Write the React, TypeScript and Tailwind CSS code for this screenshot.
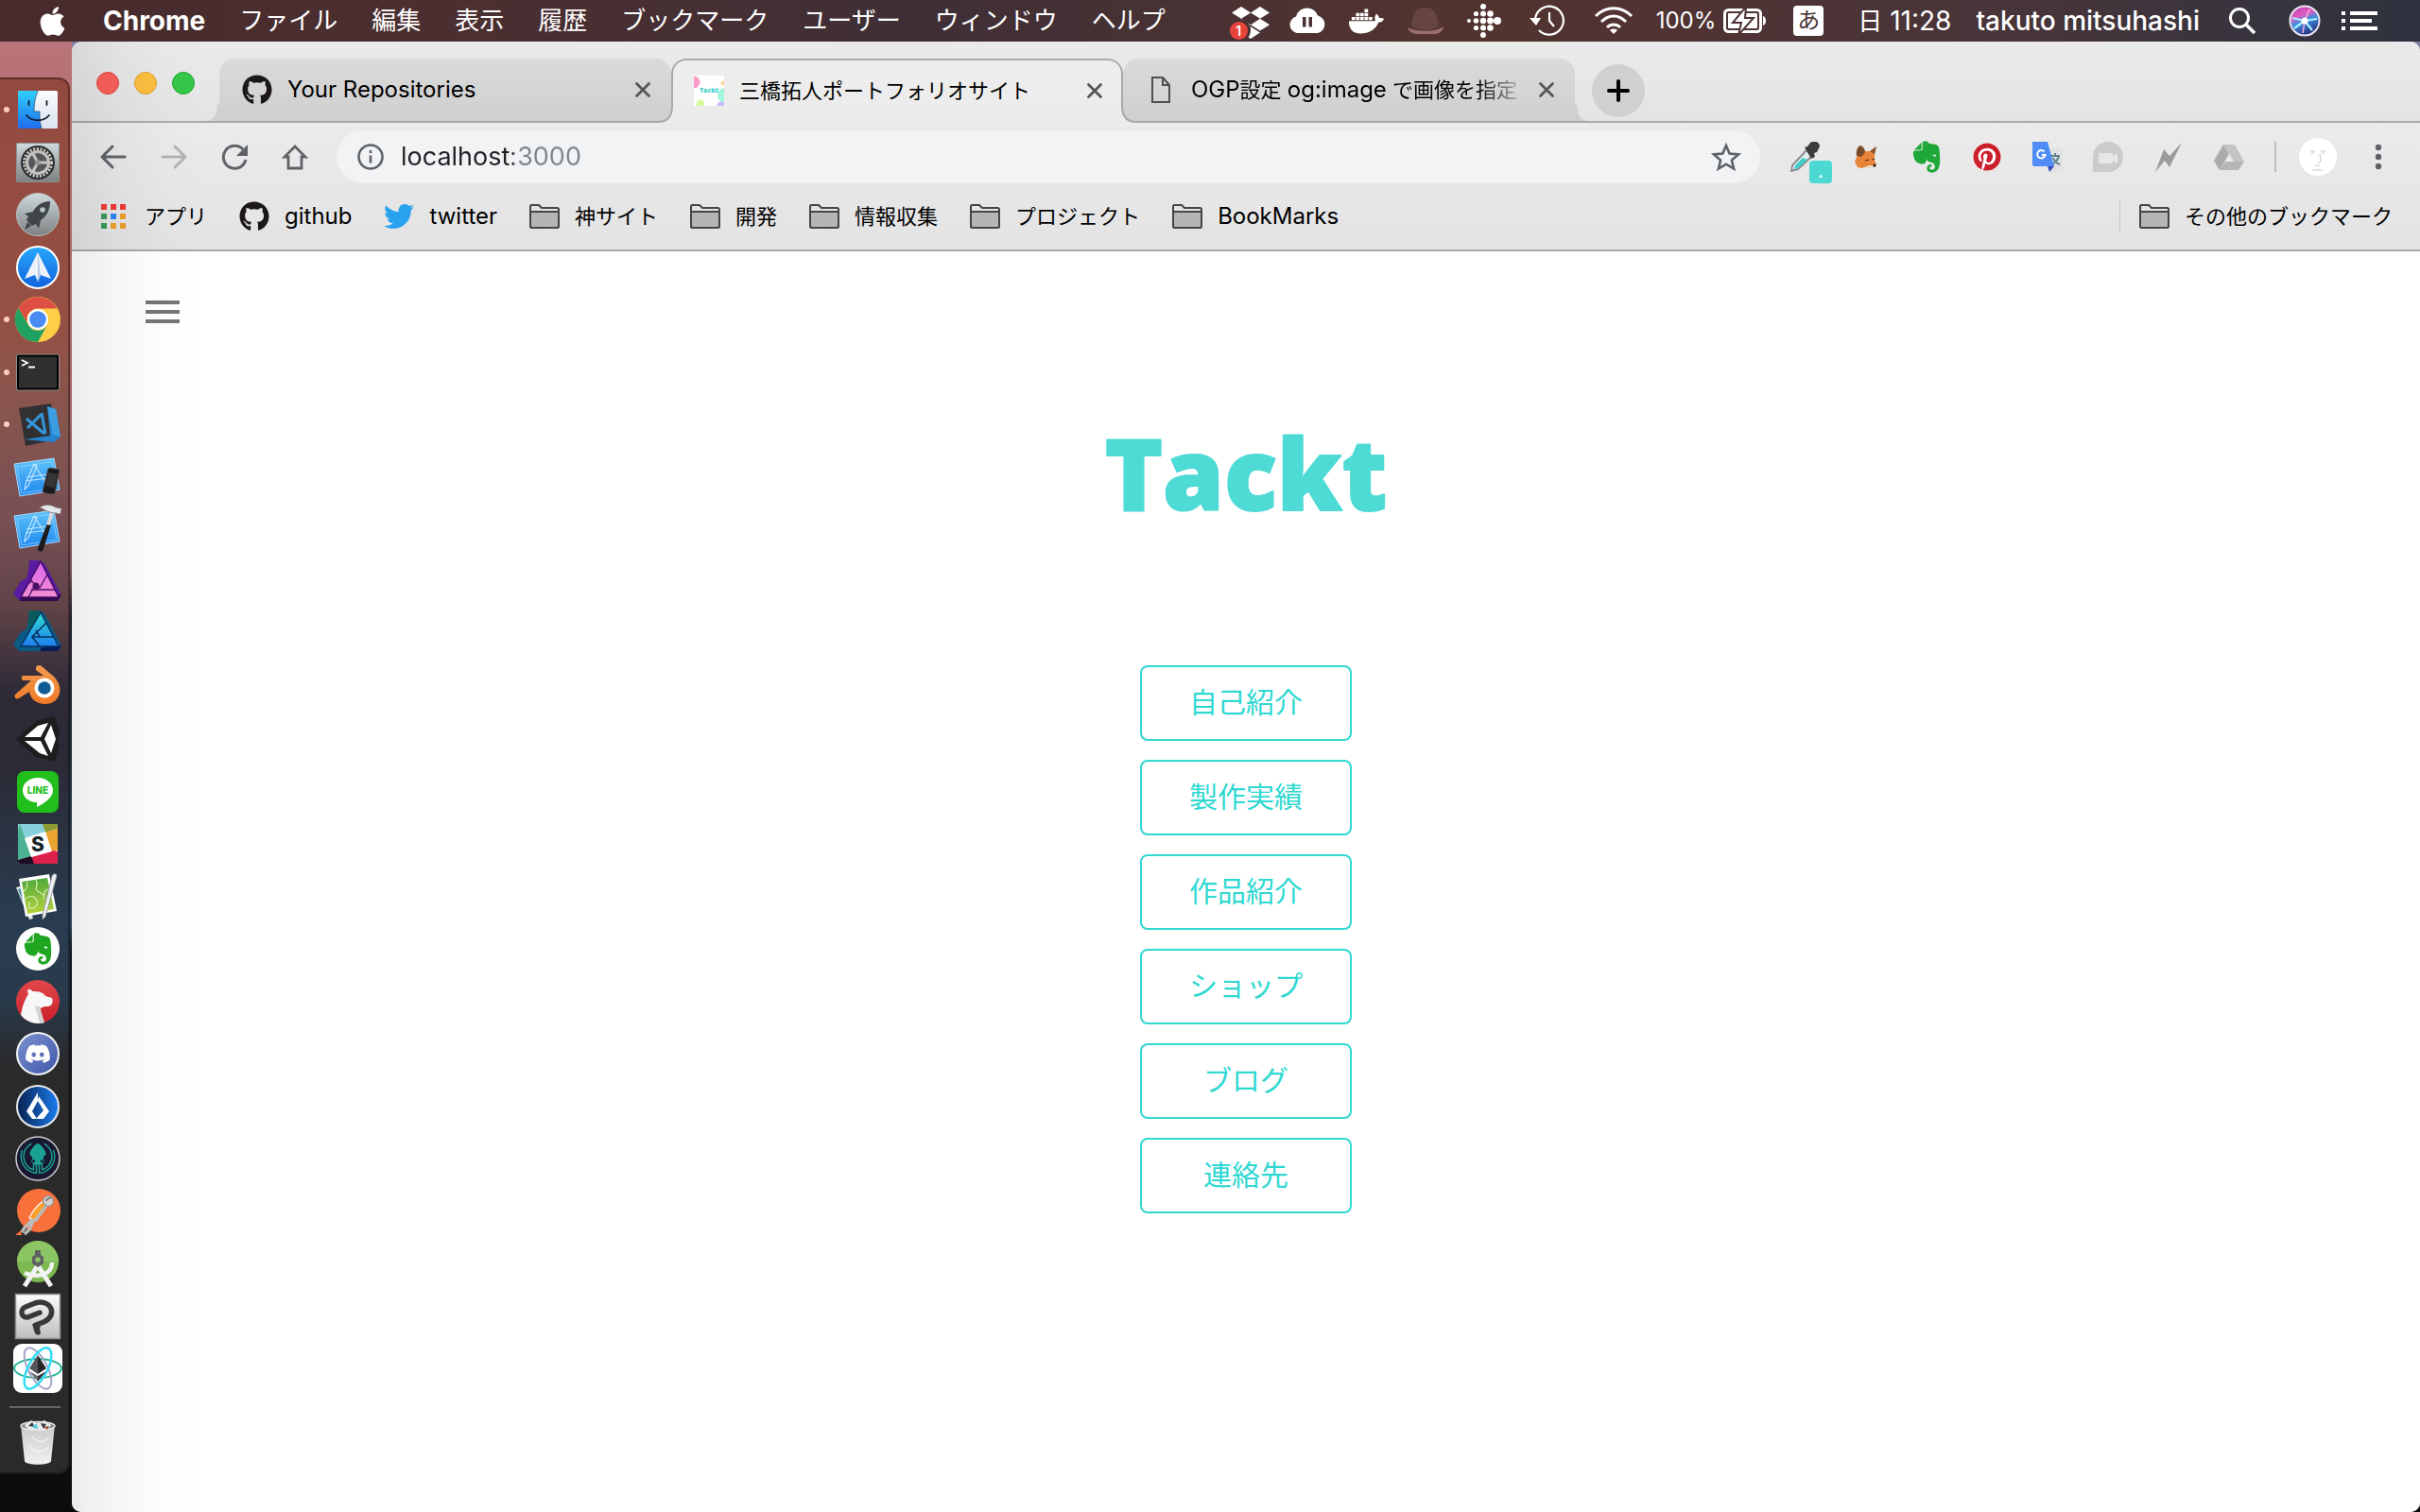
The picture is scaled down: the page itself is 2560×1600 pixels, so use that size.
import type { ReactNode } from "react";
import {
  FaApple,
  FaDiscord,
  FaDocker,
  FaDropbox,
  FaEvernote,
  FaGithub,
  FaGitkraken,
  FaPinterest,
  FaTwitter,
} from "react-icons/fa6";

/* ---------- menu bar ---------- */

const menus = ["ファイル", "編集", "表示", "履歴", "ブックマーク", "ユーザー", "ウィンドウ", "ヘルプ"];

function DropboxStatus() {
  return (
    <span className="relative -mr-1 block h-9 w-10">
      <FaDropbox className="absolute top-0 left-0 size-10" />
      <span className="absolute -bottom-1 -left-1 size-6 rounded-full bg-[#4a3132]" />
      <span className="absolute -bottom-[2px] -left-[2px] flex size-[19px] items-center justify-center rounded-full bg-[#e8443c] text-sm leading-none font-semibold">
        1
      </span>
    </span>
  );
}

function CloudPause() {
  return (
    <svg viewBox="0 0 40 28" className="h-7 w-10" fill="#fff">
      <path d="M9 27a9 9 0 0 1-1-17.500A12 12 0 0 1 31 8.500 9.500 9.500 0 0 1 31 27z" />
      <path d="M15 10h3.500v10.500H15zM21.500 10H25v10.500h-3.500z" fill="#4b3132" />
    </svg>
  );
}

function Hat() {
  return (
    <svg viewBox="0 0 40 32" className="h-8 w-10">
      <path d="M5 22C6 8 10 2 19 2s14 5 15 20c-8 5-21 5-29 0z" fill="#66443f" />
      <path d="M1 23c8 5 30 5 38-1-1 5-3 7-8 8H10c-5-1-8-3-9-7z" fill="#9a7069" />
    </svg>
  );
}

function DotDiamond() {
  const dots: [number, number, number][] = [
    [17, 3, 3],
    [9.5, 10.5, 2.6],
    [17, 10.5, 3],
    [24.5, 10.5, 3.3],
    [2, 18, 2],
    [9.5, 18, 2.8],
    [17, 18, 3.2],
    [24.5, 18, 3.4],
    [32, 18, 4],
    [9.5, 25.5, 2.6],
    [17, 25.5, 3],
    [24.5, 25.5, 3.3],
    [17, 33, 3],
  ];
  return (
    <svg viewBox="0 0 36 36" className="size-9" fill="#fff">
      {dots.map(([x, y, r]) => (
        <circle key={`${x}-${y}`} cx={x} cy={y} r={r} />
      ))}
    </svg>
  );
}

function TimeMachine() {
  return (
    <svg viewBox="0 0 38 34" className="mx-[6px] h-[34px] w-[38px]" fill="none" stroke="#fff" strokeWidth="2.200">
      <path d="M6 15A15 15 0 1 1 10 27" />
      <path d="M21 8v9l5 6" />
      <path d="M0 14h12l-5 8z" fill="#fff" stroke="none" />
    </svg>
  );
}

function Wifi() {
  return (
    <svg viewBox="0 0 42 30" className="h-[30px] w-[42px]" fill="none" stroke="#fff" strokeWidth="3">
      <path d="M2 10C13-1 29-1 40 10M8 16c8-8 18-8 26 0M14 22c4-4 10-4 14 0" />
      <path d="M17 25c2-2 6-2 8 0l-4 4z" fill="#fff" stroke="none" />
    </svg>
  );
}

function Battery() {
  return (
    <svg viewBox="0 0 46 28" className="h-7 w-[46px]">
      <rect x="1.500" y="2.500" width="38" height="23" rx="4" fill="none" stroke="#fff" strokeWidth="3" />
      <path d="M42 9c4 1 4 9 0 10z" fill="#fff" />
      <rect x="5" y="6" width="31" height="16" rx="1" fill="#fff" />
      <path d="M24-1 10 16h9l-3 13 16-18h-9z" fill="#fff" stroke="#4c3233" strokeWidth="2" />
    </svg>
  );
}

function Siri() {
  return (
    <svg viewBox="0 0 34 34" className="size-[34px]">
      <defs>
        <linearGradient id="siri" x1="0" y1="0" x2=".4" y2="1">
          <stop offset="0" stopColor="#b23bb0" />
          <stop offset=".4" stopColor="#e05ac0" />
          <stop offset=".6" stopColor="#3f8fe0" />
          <stop offset="1" stopColor="#2a3a8c" />
        </linearGradient>
      </defs>
      <circle cx="17" cy="17" r="15.500" fill="url(#siri)" stroke="#e9e4ef" strokeWidth="2" />
      <path d="M17 17l13-2M17 17 4 14M17 17 6 25M17 17l8 10" stroke="#a4f3ff" strokeWidth="2.200" />
      <path d="M17 17 22 5M17 17l-2 13" stroke="#ffb0e2" strokeWidth="1.500" />
      <circle cx="17" cy="17" r="3.500" fill="#fff" />
    </svg>
  );
}

function MenuBar() {
  return (
    <header className="flex h-11 shrink-0 items-center bg-[linear-gradient(90deg,#472b2c_0%,#4b2f31_20%,#3f2f36_38%,#4a3233_51%,#52332f_60%,#4f3333_70%,#47353a_84%,#38343e_93%,#2e323e_100%)] pr-[45px] pl-[37px] text-white">
      <button aria-label="Apple" className="mr-9 flex w-9 justify-center">
        <FaApple className="size-[35px]" />
      </button>
      <nav className="flex items-center gap-9 text-[26px] leading-8">
        <button className="text-[28px] font-bold">Chrome</button>
        {menus.map((m) => (
          <button key={m} className="whitespace-nowrap">
            {m}
          </button>
        ))}
      </nav>
      <div className="ml-auto flex items-center text-[28px] leading-8 whitespace-nowrap">
        <div className="mr-6 flex items-center gap-6">
          <DropboxStatus />
          <CloudPause />
          <FaDocker className="size-[37px]" />
          <Hat />
          <DotDiamond />
          <TimeMachine />
          <Wifi />
        </div>
        <div className="mr-7 flex items-center gap-2">
          <span className="text-2xl">100%</span>
          <Battery />
        </div>
        <span className="mr-9 flex size-8 items-center justify-center rounded bg-white text-2xl leading-none text-[#4c3335]">あ</span>
        <span className="mr-[26px]">
          <span className="text-[26px]">日</span> 11:28
        </span>
        <span className="mr-[30px] font-medium">takuto mitsuhashi</span>
        <button aria-label="Spotlight" className="mr-[34px]">
          <svg viewBox="0 0 30 30" className="size-[30px]" fill="none" stroke="#fff" strokeWidth="3">
            <circle cx="12" cy="12" r="9.500" />
            <path d="m19 19 9 9" strokeWidth="3.500" />
          </svg>
        </button>
        <button aria-label="Siri" className="mr-[22px]">
          <Siri />
        </button>
        <button aria-label="通知センター">
          <svg viewBox="0 0 38 20" className="h-5 w-[38px]" fill="#fff">
            <path d="M0 0h4v4H0zM0 8h4v4H0zM0 16h4v4H0zM9 0h29v4H9zM9 8h23v4H9zM9 16h29v4H9z" />
          </svg>
        </button>
      </div>
    </header>
  );
}

/* ---------- dock ---------- */

function Art({ children }: { children: ReactNode }) {
  return (
    <svg viewBox="0 0 52 52" className="size-[52px] overflow-visible">
      {children}
    </svg>
  );
}

function Gradients() {
  const defs: [string, string, string][] = [
    ["gFinder", "#2fd0fb", "#1f6df0"],
    ["gFace", "#fafbfd", "#dbe3f0"],
    ["gSteel", "#cfdadf", "#7d8080"],
    ["gSpark", "#27a7fb", "#0f62dd"],
    ["gXcode", "#5fc4fb", "#1d86ee"],
    ["gPhoto", "#d765f0", "#f68fd0"],
    ["gDesign", "#2de0d0", "#1f7df0"],
    ["gBlend", "#f39a4e", "#ef7a29"],
    ["gMap", "#4ea83c", "#b7d33c"],
    ["gBear", "#e2484a", "#c91f2a"],
    ["gClip", "#fdfdfd", "#bdbdbd"],
    ["gTrash", "#c9c9c9", "#f1f1f1"],
  ];
  return (
    <svg className="absolute size-0" aria-hidden="true">
      <defs>
        {defs.map(([id, a, b]) => (
          <linearGradient key={id} id={id} x1="0" y1="0" x2="0" y2="1">
            <stop offset="0" stopColor={a} />
            <stop offset="1" stopColor={b} />
          </linearGradient>
        ))}
        <linearGradient id="gLisk" x1="0" y1="0" x2="1" y2="0">
          <stop offset="0" stopColor="#08214f" />
          <stop offset="1" stopColor="#1a7df0" />
        </linearGradient>
        <linearGradient id="gDiscord" x1="0" y1="0" x2="1" y2="1">
          <stop offset="0" stopColor="#7f93d0" />
          <stop offset="1" stopColor="#3d55a8" />
        </linearGradient>
      </defs>
    </svg>
  );
}

const Xcode = () => (
  <>
    <path d="M1 12 43 6l6 33-42 7z" fill="url(#gXcode)" stroke="#a9dcff" strokeWidth="1" />
    <path d="M4 15l37-5 5 27-37 6z" fill="none" stroke="#8fd0fd" strokeWidth=".8" />
    <path d="M22 12 13 33l-1 6 4-4 9-21zM22 12l14 22M14 26l22-3M13 30l24-3" fill="none" stroke="#bfe6ff" strokeWidth="1.200" />
  </>
);

const dockApps: { name: string; running?: boolean; art: ReactNode }[] = [
  {
    name: "Finder",
    running: true,
    art: (
      <>
        <rect x="5" y="6" width="42" height="40" rx="1.500" fill="url(#gFace)" />
        <path d="M6.500 6H26c-3 7-4 15-4 22h6c0 6 0 12 2 18H6.500A1.500 1.500 0 0 1 5 44.500v-37A1.500 1.500 0 0 1 6.500 6z" fill="url(#gFinder)" />
        <path d="M26 6c-3 7-4 15-4 22h6c0 6 0 12 2 18" fill="none" stroke="#33567d" strokeWidth=".8" />
        <path d="M16.500 17v4M35.500 17v4M14 32c6 7 18 7 24 0" fill="none" stroke="#12202f" strokeWidth="1.800" strokeLinecap="round" />
      </>
    ),
  },
  {
    name: "システム環境設定",
    art: (
      <>
        <rect x="3.500" y="5.500" width="45" height="41" rx="1" fill="url(#gSteel)" stroke="#8d9293" />
        <circle cx="26" cy="26" r="18" fill="#2b2c2e" />
        <circle cx="26" cy="26" r="14.500" fill="none" stroke="#c9c6c1" strokeWidth="3" strokeDasharray="2.200 1.500" />
        <circle cx="26" cy="26" r="11.500" fill="#56575a" stroke="#c5c3bf" strokeWidth="3" />
        <path d="M26 26h12M26 26l-6-11M26 26l-6 11" stroke="#c5c3bf" strokeWidth="3" />
        <circle cx="26" cy="26" r="3" fill="#97948f" />
      </>
    ),
  },
  {
    name: "Launchpad",
    art: (
      <>
        <circle cx="26" cy="26" r="22.500" fill="url(#gSteel)" stroke="#b9c2c5" />
        <path d="M39 12c-9 0-15 5-18 11l-9 2 4 3-2 4 6 6 4-2 3 5 2-9c6-4 10-10 10-20z" fill="#3f4549" />
        <circle cx="31" cy="21" r="2.800" fill="#b9c3c6" />
        <path d="M15 34l-3 8 7-4z" fill="#3f4549" />
      </>
    ),
  },
  {
    name: "Spark",
    art: (
      <>
        <circle cx="26" cy="26" r="22" fill="url(#gSpark)" stroke="#fff" strokeWidth="2" />
        <path d="M26 10 12 38l11-4 3 7 3-7 11 4z" fill="#eef2fb" />
        <path d="M26 10v31l3-7z" fill="#bcc9e4" />
      </>
    ),
  },
  {
    name: "Chrome",
    running: true,
    art: (
      <>
        <circle cx="26" cy="26" r="24" fill="#ffcd46" />
        <path d="M5.200 14A24 24 0 0 1 46.800 14.500H26A11.500 11.500 0 0 0 15.500 31z" fill="#dd4f43" />
        <path d="M5.200 14A24 24 0 0 0 26 50l10-18A11.500 11.500 0 0 1 15.500 31z" fill="#1fa261" />
        <circle cx="26" cy="26" r="11" fill="#fff" />
        <circle cx="26" cy="26" r="8.800" fill="#4b8bf4" />
      </>
    ),
  },
  {
    name: "ターミナル",
    running: true,
    art: (
      <>
        <rect x="3.500" y="7" width="45" height="38" rx="2" fill="#000" stroke="#8f8f8f" />
        <rect x="6" y="9.500" width="40" height="33" fill="#303030" />
        <path d="m9 13 6 3-6 3M16 20.500h7" fill="none" stroke="#fff" strokeWidth="1.800" />
      </>
    ),
  },
  {
    name: "Visual Studio Code",
    running: true,
    art: (
      <>
        <path d="M6 9 40 4l6 38-33 7z" fill="#313133" />
        <path d="M36 7l9 3 5 29-7 6-31-3 27-4z" fill="#2484cf" />
        <path d="M36 7l9 3 5 29-8-2z" fill="#3c9de2" />
        <path d="M14 20 33 36M30 15 15 30M30 14l4 22" fill="none" stroke="#3396da" strokeWidth="3" />
      </>
    ),
  },
  {
    name: "Simulator",
    art: (
      <>
        <Xcode />
        <path d="M37 17c1-1.500 10 0 12 1.500L44 43c-1 2-12 0-13-2z" fill="#1b1b1d" stroke="#4c4c4e" />
        <path d="M37 21l10 1.500-3 15-10-2z" fill="#353538" />
      </>
    ),
  },
  {
    name: "Xcode",
    art: (
      <>
        <Xcode />
        <path d="M36 20 26 46c-1 4 5 5 6 1l8-26z" fill="#1a1a1c" />
        <path d="M39 8 35 21l4 1 4-13z" fill="#d5d8da" />
        <path d="M28 3c6-4 12-3 17 0l6 1-1 6-5-1c-6 0-11-3-17-6z" fill="#e6e8ea" stroke="#737679" strokeWidth=".8" />
      </>
    ),
  },
  {
    name: "Affinity Photo",
    art: (
      <>
        <path d="M17 3h10l6 3 18 34-4 5H6L0 38l8-13 6-3 2-9z" fill="#5a1ba0" />
        <path d="M51 39l-4 7H6l3-4z" fill="#33084f" />
        <path d="M29 4 8 42h40z" fill="url(#gPhoto)" stroke="#3e0c66" strokeWidth="1.400" />
        <path d="M29 4 18 24l10 8 8-14M28 31h-6l-6 11M20 24l-4 4M26 34h18M24 30l3 4h-8" fill="none" stroke="#4d1173" strokeWidth="1.400" />
        <circle cx="24" cy="30" r="3.500" fill="#4a0e63" />
      </>
    ),
  },
  {
    name: "Affinity Designer",
    art: (
      <>
        <path d="M17 1h10l6 3 18 34-4 6H6L0 37l8-13 6-3 2-10z" fill="#0b5a86" />
        <path d="M17 1h10l3 2-14 20 0-12z" fill="#0a5b5c" />
        <path d="M51 38l-4 6H28l2-4z" fill="#071b5a" />
        <path d="M29 3 8 39h40z" fill="url(#gDesign)" stroke="#07305e" strokeWidth="1.400" />
        <path d="M35 14 20 29l8 10M20 29h22M24 22l4 7" fill="none" stroke="#07305e" strokeWidth="1.600" />
      </>
    ),
  },
  {
    name: "Blender",
    art: (
      <>
        <path d="M24 5c1-2 4-3 6-1l13 11c12 12 6 29-9 29-10 0-16-6-17-13L6 38c-4 2-6-3-3-5l16-14h-8c-3 0-3-5 0-5h21l-8-6z" fill="url(#gBlend)" />
        <circle cx="33" cy="27" r="10.500" fill="#fff" />
        <circle cx="33" cy="27" r="6.800" fill="#0f5c94" />
      </>
    ),
  },
  {
    name: "Unity",
    art: (
      <>
        <path d="M3 26 24 7l20-5 5 18-2 6 2 6-5 18-20-5z" fill="#1d1d1d" />
        <path d="M12 24 26 12l11-3-8 15zM12 28l16 13 9 3-8-16zM33 26l7-15 5 15-5 15z" fill="#fff" />
      </>
    ),
  },
  {
    name: "LINE",
    art: (
      <>
        <rect x="4" y="4" width="44" height="44" rx="8" fill="#21bf1c" />
        <path d="M26 11c9 0 16 6 16 13 0 4-2 7-5 10-4 4-10 7-12 8v-5c-9 0-15-6-15-13s7-13 16-13z" fill="#fff" />
        <text x="26" y="28" textAnchor="middle" fontSize="10" fontWeight="800" fill="#21bf1c" className="font-['Inter',sans-serif]">
          LINE
        </text>
      </>
    ),
  },
  {
    name: "Slack",
    art: (
      <>
        <rect x="5" y="5" width="42" height="42" rx="2" fill="#fff" />
        <path d="M5 5h27l3 10-23 7-7-10z" fill="#86d1dc" />
        <path d="M5 12l2-7 6 16 6 19-14 3z" fill="#4db293" />
        <path d="M31 5h14a2 2 0 0 1 2 2v3l-13 4z" fill="#8e9c35" />
        <path d="M34 14l13-4v23l-7 1z" fill="#eaa430" />
        <path d="M19 40l23-7 5 1v11a2 2 0 0 1-2 2H20z" fill="#dc1f4b" />
        <path d="M5 43l14-4 3 8H7a2 2 0 0 1-2-2z" fill="#1f0b24" />
        <path d="M12 20l22-7 7 21-22 6z" fill="#fff" />
        <text x="26" y="34" textAnchor="middle" fontSize="21" fontWeight="800" fill="#16242a" className="font-['Inter',sans-serif]">
          S
        </text>
      </>
    ),
  },
  {
    name: "Coda",
    art: (
      <>
        <path d="M3 16l8-2 10 35-4 1z" fill="#e4e8ea" />
        <path d="M5 18l4-1 7 28z" fill="#3e88a5" />
        <path d="M6 7 38 2l8 39-33 6z" fill="#fff" />
        <path d="M9 10l27-4 7 33-28 5z" fill="url(#gMap)" />
        <path d="M15 10c0 8-3 10-5 10M24 8c4 6-3 9 2 12s8 4 6 9M13 28c5-4 10-3 12 2s-3 9-7 8 2-7-2-6M38 18c-4 0-6 3-5 7" fill="none" stroke="#d8ecb2" strokeWidth="1.200" />
        <path d="M41 4c1-3 5-3 5 0L34 47l-3 3V45z" fill="#eceef0" stroke="#8b8f92" strokeWidth=".8" />
      </>
    ),
  },
  {
    name: "Evernote",
    art: (
      <>
        <circle cx="26" cy="26" r="23" fill="#fff" />
        <FaEvernote x={7} y={7} size={38} color="#1fa51f" />
      </>
    ),
  },
  {
    name: "Bear",
    art: (
      <>
        <circle cx="26" cy="26" r="23" fill="url(#gBear)" />
        <path d="M8 40c2-10 4-16 8-22l-1-3c0-3 4-3 5 0 7 0 12 1 14 5l7 2c2 6-1 9-5 9s-8 1-8 5l5 12A23 23 0 0 1 8 40z" fill="#f7f7f7" />
        <path d="M23 31l5 0 5 17a23 23 0 0 1-5 1z" fill="#d3d3d4" />
      </>
    ),
  },
  {
    name: "Discord",
    art: (
      <>
        <circle cx="26" cy="26" r="22" fill="url(#gDiscord)" stroke="#f4f4f6" strokeWidth="2" />
        <FaDiscord x={12} y={12} size={28} color="#fff" />
      </>
    ),
  },
  {
    name: "Lisk",
    art: (
      <>
        <circle cx="26" cy="26" r="22" fill="url(#gLisk)" stroke="#e9e9ec" strokeWidth="2" />
        <path d="m26 11-12 20 6 8h5l-5-8 6-11zM27 15l11 16-6 8h-8l8-9-6-10z" fill="#fff" />
      </>
    ),
  },
  {
    name: "GitKraken",
    art: (
      <>
        <circle cx="26" cy="26" r="23" fill="#181831" stroke="#c9c9cd" strokeWidth="1.500" />
        <FaGitkraken x={7} y={7} size={38} color="#1aa193" />
      </>
    ),
  },
  {
    name: "Postman",
    art: (
      <>
        <circle cx="27" cy="25" r="23" fill="#f8713a" />
        <path d="M37 17 22 36l-5-3c4-9 10-15 16-19z" fill="#fca02f" stroke="#fff" strokeWidth="1.200" />
        <path d="M37 17 24 35l-3 1-4 9-5 5M20 35l-8 8-3 5" fill="none" stroke="#b9b9b9" strokeWidth="3.500" />
        <circle cx="37" cy="15" r="5.500" fill="#d2d0ce" stroke="#8b8b8b" strokeWidth="1.200" />
        <path d="M35 15a4 4 0 0 1 5-3" fill="none" stroke="#6c6c6c" strokeWidth="1.500" />
        <path d="m2 51 6-5 1 5z" fill="#f8713a" />
      </>
    ),
  },
  {
    name: "Android Studio",
    art: (
      <>
        <circle cx="26" cy="24" r="22" fill="#7cb850" />
        <path d="M4 24a22 22 0 0 1 44 0z" fill="#8cc564" />
        <path d="M26 28 12 50M26 28l14 22" stroke="#f2f2f2" strokeWidth="5" />
        <path d="M12 36c14 6 29 2 29-11" fill="none" stroke="#f2f2f2" strokeWidth="4.500" />
        <path d="M23 12h6v5l3 2v7l-6 4-6-4v-7l3-2z" fill="#5f6061" />
        <circle cx="26" cy="22" r="2.800" fill="#8cc564" />
      </>
    ),
  },
  {
    name: "CLIP STUDIO PAINT",
    art: (
      <>
        <rect x="2.500" y="2.500" width="47" height="47" fill="url(#gClip)" stroke="#8f8f8f" strokeWidth="1.500" />
        <path d="M28 22 15 27c-7 1-8-9-2-11l10-4c17-5 25 13 9 20l-8 3" fill="none" stroke="#383838" strokeWidth="5.500" strokeLinecap="round" />
        <path d="M20 34h9l-1 6c3 6-2 7-5 4z" fill="#383838" />
      </>
    ),
  },
  {
    name: "Ethereum Wallet",
    art: (
      <>
        <rect width="52" height="52" rx="9" fill="#fff" />
        <ellipse cx="26" cy="26" rx="25" ry="10" fill="none" stroke="#27b398" strokeWidth="2" />
        <ellipse cx="26" cy="26" rx="10" ry="24" fill="none" stroke="#a3a6c6" strokeWidth="2" transform="rotate(-28 26 26)" />
        <ellipse cx="26" cy="26" rx="10" ry="24" fill="none" stroke="#33dcf8" strokeWidth="2.500" transform="rotate(28 26 26)" />
        <path d="M26 12 17 26l9 6z" fill="#55555a" />
        <path d="m26 12 9 14-9 6z" fill="#252528" />
        <path d="m17 29 9 11V34z" fill="#6a6a6e" />
        <path d="m35 29-9 11V34z" fill="#313136" />
      </>
    ),
  },
];

function Dock() {
  return (
    <aside className="flex w-[76px] shrink-0 flex-col bg-[linear-gradient(180deg,#b87478_0%,#a56468_24%,#7a5557_36%,#1a1a26_39%,#2b4456_60%,#0c0f16_62%,#0d0c0d_100%)] pt-[38px] pb-10">
      <Gradients />
      <div className="flex w-[74px] flex-1 flex-col rounded-r-xl border-2 border-l-0 border-[#00000055] bg-[linear-gradient(180deg,#94493f_0%,#955043_17%,#87554e_24%,#774f54_32%,#5f4347_38%,#2e2a38_44%,#2b2a35_49%,#2a3c50_60%,#293a4c_66%,#2a2b2f_70%,#2a2a2a_72%)] bg-origin-border pt-[6px] pb-[6px]">
        <ul className="flex flex-1 flex-col justify-between">
          {dockApps.map((app) => (
            <li key={app.name} className="flex h-[52px] items-center">
              <span className={app.running ? "ml-1 size-[6px] rounded-full bg-[#ffcdc4]" : "ml-1 size-[6px]"} />
              <button aria-label={app.name} className="ml-1">
                <Art>{app.art}</Art>
              </button>
            </li>
          ))}
        </ul>
        <hr className="mt-[14px] mr-2 ml-[10px] h-[2px] border-0 bg-[#666666]" />
        <button aria-label="ゴミ箱" className="mt-3 ml-[21px] w-[38px]">
          <svg viewBox="0 0 38 50" className="h-[50px] w-[38px]">
            <path d="M1 6h36l-4 38c-1 5-27 5-28 0z" fill="url(#gTrash)" />
            <ellipse cx="19" cy="7" rx="18" ry="4.500" fill="#8f8f8f" stroke="#e6e6e6" strokeWidth="1.500" />
            <path d="M5 6l7-5 6 3 8-3 7 5-4 5H9z" fill="#e9e9e9" />
            <path d="M9 7l4-4 3 5zM22 4l6 1-3 5z" fill="#3b3b46" />
            <path d="M14 6l4-1 1 5-5-1z" fill="#55c6dd" />
            <path d="M25 8l6-1-2 4z" fill="#a0532b" />
            <path d="M12 18c6 6 12 8 18 2M10 26c4 10 12 10 20 4" fill="none" stroke="#fafafa" strokeWidth="1.500" opacity=".7" />
          </svg>
        </button>
      </div>
    </aside>
  );
}

/* ---------- browser chrome ---------- */

function CloseIcon() {
  return (
    <svg viewBox="0 0 16 16" className="size-4" stroke="#555" strokeWidth="2.800" strokeLinecap="round">
      <path d="m1.500 1.500 13 13M14.500 1.500l-13 13" />
    </svg>
  );
}

function TabFoot({ side, active }: { side: "left" | "right"; active?: boolean }) {
  return (
    <svg
      viewBox="0 0 16 18"
      className={
        side === "left"
          ? "absolute bottom-0 -left-4 h-[18px] w-4"
          : "absolute -right-4 bottom-0 h-[18px] w-4 -scale-x-100"
      }
    >
      <path d={active ? "M16 0v18H0v-1Q15 17 15 0z" : "M16 0v18H0Q14 18 14 0z"} fill={active ? "#ebebeb" : "#cfcfcf"} />
      {active && <path d="M0 17Q15 17 15 0" fill="none" stroke="#a9a9a9" strokeWidth="2" />}
    </svg>
  );
}

type TabProps = { label: string; title: ReactNode; icon: ReactNode; active?: boolean; edge?: "left" | "right"; fade?: boolean };

function Tab({ label, title, icon, active, edge, fade }: TabProps) {
  return (
    <div
      className={
        active
          ? "relative z-10 -mb-[2px] flex h-[68px] w-[478px] items-center rounded-t-2xl border-2 border-b-0 border-[#a9a9a9] bg-[linear-gradient(180deg,#eeeeee,#ebebeb)] pr-5 pb-[2px] pl-[22px]"
          : "relative flex h-[66px] w-[478px] items-center rounded-t-2xl bg-[linear-gradient(180deg,#dadada,#cfcfcf)] pr-[22px] pl-6"
      }
    >
      {(active || edge === "left") && <TabFoot side="left" active={active} />}
      {(active || edge === "right") && <TabFoot side="right" active={active} />}
      <button role="tab" aria-selected={!!active} className="flex min-w-0 flex-1 items-center gap-4 text-left">
        <span className="flex size-8 shrink-0 items-center justify-center">{icon}</span>
        <span
          className={
            fade
              ? "text-[22px] leading-8 whitespace-nowrap text-black [mask-image:linear-gradient(90deg,#000_88%,#0003)]"
              : "text-[22px] leading-8 whitespace-nowrap text-black"
          }
        >
          {title}
        </span>
      </button>
      <button aria-label={`${label} を閉じる`} className="ml-4">
        <CloseIcon />
      </button>
    </div>
  );
}

function SiteIcon() {
  return (
    <svg viewBox="0 0 32 32" className="size-8">
      <defs>
        <clipPath id="site">
          <rect width="32" height="32" />
        </clipPath>
      </defs>
      <g clipPath="url(#site)">
        <rect width="32" height="32" fill="#fff" />
        <circle cx="0" cy="7" r="6.500" fill="#fb9ccb" />
        <circle cx="31" cy="8" r="2.500" fill="#fbd9a0" />
        <circle cx="33" cy="21" r="8" fill="#a3f5dc" />
        <circle cx="7" cy="30" r="4.500" fill="#d8f99b" />
        <circle cx="29" cy="32" r="4.500" fill="#c9b8fb" />
        <text x="16" y="18" textAnchor="middle" fontSize="7" fontWeight="800" fill="#3fd0cb" className="font-['Open_Sans',sans-serif]">
          Tackt
        </text>
      </g>
    </svg>
  );
}

function PageIcon() {
  return (
    <svg viewBox="0 0 20 28" className="h-7 w-5" fill="none" stroke="#4f4f4f" strokeWidth="2">
      <path d="M1 1h11l7 8v18H1z" />
      <path d="M12 1v8h7" />
    </svg>
  );
}

function TabStrip() {
  return (
    <div className="flex items-end border-b-2 border-[#a9a9a9] bg-[linear-gradient(180deg,#eaeaea,#e4e4e4)] pt-[18px]">
      <div className="flex h-[66px] items-center gap-4 pr-[26px] pb-[14px] pl-[26px]">
        <button aria-label="閉じる" className="size-6 rounded-full border border-[#e0443e] bg-[#fb605b]" />
        <button aria-label="最小化" className="size-6 rounded-full border border-[#dfa023] bg-[#fdbe41]" />
        <button aria-label="最大化" className="size-6 rounded-full border border-[#1fa62e] bg-[#34c84a]" />
      </div>
      <div role="tablist" className="flex items-end">
        <Tab
          label="Your Repositories"
          title={<span className="text-2xl">Your Repositories</span>}
          icon={<FaGithub className="size-8 text-[#1b1817]" />}
          edge="left"
        />
        <Tab label="三橋拓人ポートフォリオサイト" title="三橋拓人ポートフォリオサイト" icon={<SiteIcon />} active />
        <Tab
          label="OGP設定"
          title={
            <>
              <span className="text-2xl">OGP</span>設定 <span className="text-2xl">og:image</span> で画像を指定
            </>
          }
          icon={<PageIcon />}
          edge="right"
          fade
        />
      </div>
      <button aria-label="新しいタブ" className="mb-1 ml-[18px] flex size-14 items-center justify-center rounded-full bg-[#d0d0d0]">
        <svg viewBox="0 0 24 24" className="size-6" stroke="#000" strokeWidth="4" strokeLinecap="round">
          <path d="M12 2v20M2 12h20" />
        </svg>
      </button>
    </div>
  );
}

function Dropper() {
  return (
    <span className="relative block size-8">
      <svg viewBox="0 0 32 32" className="size-8">
        <path d="M17 9l6 6L8 29l-7 2 1-6z" fill="#e3eded" stroke="#8b8f90" strokeWidth="2" />
        <path d="M13 17l5 2L8 28l-4 1 1-4z" fill="#3fcfcb" />
        <path d="M15 6l3-1 3-4c4-3 10-1 10 4l-3 6-3 1 1 4-4 2z" fill="#3c3c3d" />
      </svg>
      <span className="absolute top-5 left-5 flex size-6 items-center justify-center rounded bg-[#4dd9d3] text-base leading-none font-bold text-white">
        .
      </span>
    </span>
  );
}

function Fox() {
  return (
    <svg viewBox="0 0 24 26" className="h-[26px] w-6">
      <path d="M3 11l8-4 5 0 7-5-2 8 0 7 2 4-4 4-6-2-5 2-5-1-3-6z" fill="#e8833a" />
      <path d="M2 12C1 5 4 1 6 1c3 1 5 4 5 7l-4 5z" fill="#7b4a2b" />
      <path d="M16 7l7-5-2 8z" fill="#8a4f2a" />
      <path d="M8 25l7-3 6 0-1 3z" fill="#eddccb" />
      <circle cx="21" cy="22" r="1.600" fill="#1d1b1b" />
      <path d="M11 17l4-1M18 16l3-1" stroke="#5b3216" strokeWidth="1.200" />
    </svg>
  );
}

function Translate() {
  return (
    <svg viewBox="0 0 32 32" className="size-8">
      <path d="M12 7h20v25H19z" fill="#dfe1e3" />
      <path d="M20 15h9M24 12v3M28 15c-1 4-4 7-7 9M22 17c1 3 4 6 7 7" fill="none" stroke="#63838f" strokeWidth="2" />
      <path d="M0 0h16l7 26H2a2 2 0 0 1-2-2z" fill="#4f8cf5" />
      <path d="M16 26h7l-5 6z" fill="#3950b8" />
      <path d="M12.500 10.500a4.200 4.200 0 1 0 1 3.500H10" fill="none" stroke="#fff" strokeWidth="2" />
    </svg>
  );
}

function Toolbar() {
  return (
    <div className="flex h-[72px] items-center pr-10 pl-7 text-[#5f6368]">
      <div className="flex items-center gap-8">
        <button aria-label="戻る">
          <svg viewBox="0 0 32 32" className="size-8" fill="none" stroke="currentColor" strokeWidth="3" strokeLinecap="round" strokeLinejoin="round">
            <path d="M28 16H4M15 5 4 16l11 11" />
          </svg>
        </button>
        <button aria-label="進む" className="text-[#b3b3b3]">
          <svg viewBox="0 0 32 32" className="size-8" fill="none" stroke="currentColor" strokeWidth="3" strokeLinecap="round" strokeLinejoin="round">
            <path d="M4 16h24M17 5l11 11-11 11" />
          </svg>
        </button>
        <button aria-label="再読み込み">
          <svg viewBox="0 0 32 32" className="size-8" fill="none" stroke="currentColor" strokeWidth="3">
            <path d="M25 8A12 12 0 1 0 28 19" />
            <path d="M30 3v12H18z" fill="currentColor" stroke="none" />
          </svg>
        </button>
        <button aria-label="ホーム">
          <svg viewBox="0 0 32 32" className="size-8" fill="none" stroke="currentColor" strokeWidth="2.800">
            <path d="M16 5 5 16h4v12h14V16h4z" />
          </svg>
        </button>
      </div>
      <div className="ml-7 flex h-14 flex-1 items-center rounded-full bg-[#f1f3f5] pr-5 pl-[22px]">
        <svg viewBox="0 0 28 28" className="size-7 shrink-0" fill="none" stroke="currentColor" strokeWidth="2.600">
          <circle cx="14" cy="14" r="12.500" />
          <path d="M14 12.500v8M14 7v3" />
        </svg>
        <input
          aria-label="アドレス"
          defaultValue="localhost:3000"
          className="ml-[18px] h-10 min-w-0 flex-1 bg-[linear-gradient(90deg,#202124_0,#202124_119px,#80868b_119px)] bg-clip-text text-[27px] text-transparent caret-black outline-none"
        />
        <button aria-label="ブックマークに追加">
          <svg viewBox="0 0 32 32" className="size-8" fill="none" stroke="currentColor" strokeWidth="2.600">
            <path d="m16 4 3.600 8.600 9.400.8-7.100 6.100 2.200 9.100L16 23.700l-8.100 4.900 2.200-9.100L3 13.400l9.400-.8z" />
          </svg>
        </button>
      </div>
      <div className="ml-8 flex items-center gap-8">
        <button aria-label="ColorPick">
          <Dropper />
        </button>
        <button aria-label="MetaMask" className="flex w-8 justify-center">
          <Fox />
        </button>
        <button aria-label="Evernote" className="flex size-8 items-center justify-center">
          <FaEvernote className="size-[38px] shrink-0 text-[#1fa838]" />
        </button>
        <button aria-label="Pinterest" className="flex size-8 items-center justify-center rounded-full">
          <span className="rounded-full bg-white">
            <FaPinterest className="size-[30px] text-[#cb1f2b]" />
          </span>
        </button>
        <button aria-label="Google 翻訳">
          <Translate />
        </button>
        <button aria-label="ハングアウト">
          <svg viewBox="0 0 32 32" className="size-8">
            <path d="M16 0a16 16 0 1 1 0 32H0V16A16 16 0 0 1 16 0z" fill="#cbcbcb" />
            <path d="M6 12h15v3l5-3v11l-5-3v3H6z" fill="#e6e6e6" />
          </svg>
        </button>
        <button aria-label="Lightning">
          <svg viewBox="0 0 32 32" className="size-8">
            <path d="M30 1 17 27 12 20 2 32 11 8l6 7z" fill="#9b9b9b" />
          </svg>
        </button>
        <button aria-label="Google ドライブ">
          <svg viewBox="0 0 32 32" className="size-8">
            <path d="M10 3 0 20l6 10 10-17z" fill="#ababab" />
            <path d="M10 3h12l10 18H20z" fill="#c4c4c4" />
            <path d="M12 21h20l-6 9H6z" fill="#b6b6b6" />
            <path d="m16 13 5 8h-9z" fill="#eaeaea" />
          </svg>
        </button>
        <span className="h-8 w-[2px] bg-[#bdbdbd]" />
      </div>
      <button aria-label="プロフィール" className="ml-6 size-10">
        <svg viewBox="0 0 40 40" className="size-10">
          <circle cx="20" cy="20" r="20" fill="#fff" />
          <path d="M12 14h5M23 14h5M13 16h3M24 16h3M22 17l1 8-3 1M17 29h5M14 34h11" fill="none" stroke="#c6c6c6" strokeWidth="1" />
        </svg>
      </button>
      <button aria-label="メニュー" className="ml-10">
        <svg viewBox="0 0 8 32" className="h-8 w-2" fill="currentColor">
          <circle cx="4" cy="6" r="3.200" />
          <circle cx="4" cy="16" r="3.200" />
          <circle cx="4" cy="26" r="3.200" />
        </svg>
      </button>
    </div>
  );
}

function Folder() {
  return (
    <svg viewBox="0 0 32 26" className="h-[26px] w-8" stroke="#454545" strokeWidth="2">
      <path d="M1 2.500A1.500 1.500 0 0 1 2.500 1H10l3 3h16.500A1.500 1.500 0 0 1 31 5.500V23a2 2 0 0 1-2 2H3a2 2 0 0 1-2-2z" fill="#e4e4e4" />
      <path d="M1 8h30v15a2 2 0 0 1-2 2H3a2 2 0 0 1-2-2z" fill="#b5b5b5" />
    </svg>
  );
}

function AppsGrid() {
  const colors = ["#ef3a36", "#ef3a36", "#ef3a36", "#379a5a", "#2a87f0", "#eba02c", "#379a5a", "#eba02c", "#eba02c"];
  return (
    <svg viewBox="0 0 26 26" className="size-[26px]">
      {colors.map((c, i) => (
        <rect key={i} x={(i % 3) * 10} y={Math.floor(i / 3) * 10} width="6" height="6" fill={c} />
      ))}
    </svg>
  );
}

function Bookmark({ icon, label, latin }: { icon: ReactNode; label: string; latin?: boolean }) {
  return (
    <a href="#" className="flex items-center gap-4 whitespace-nowrap">
      {icon}
      <span className={latin ? "text-2xl leading-[38px]" : ""}>{label}</span>
    </a>
  );
}

function BookmarksBar() {
  return (
    <nav aria-label="ブックマーク" className="flex h-16 items-start gap-[34px] border-b-2 border-[#a8a8a8] pt-2 pr-[29px] pl-[31px] text-[22px] leading-[38px] text-black">
      <a href="#" className="flex items-center gap-5 whitespace-nowrap">
        <AppsGrid />
        <span>アプリ</span>
      </a>
      <Bookmark icon={<FaGithub className="size-8 text-[#1b1817]" />} label="github" latin />
      <Bookmark icon={<FaTwitter className="size-8 text-[#2aa3ef]" />} label="twitter" latin />
      {["神サイト", "開発", "情報収集", "プロジェクト"].map((b) => (
        <Bookmark key={b} icon={<Folder />} label={b} />
      ))}
      <Bookmark icon={<Folder />} label="BookMarks" latin />
      <div className="ml-auto flex items-center gap-5">
        <span className="h-8 w-px bg-[#c2c2c2]" />
        <Bookmark icon={<Folder />} label="その他のブックマーク" />
      </div>
    </nav>
  );
}

/* ---------- page ---------- */

const links = ["自己紹介", "製作実績", "作品紹介", "ショップ", "ブログ", "連絡先"];

function Page() {
  return (
    <main className="flex flex-1 flex-col bg-white">
      <button aria-label="メニューを開く" className="mt-[52px] ml-[78px] flex w-9 flex-col gap-[6px]">
        <span className="h-1 w-full bg-[#757575]" />
        <span className="h-1 w-full bg-[#757575]" />
        <span className="h-1 w-full bg-[#757575]" />
      </button>
      <h1 className="mt-[84px] flex justify-center">
        <svg viewBox="0 0 360 160" className="h-40 w-[360px]">
          <text
            x="180"
            y="114"
            textAnchor="middle"
            fontSize="104"
            fontWeight="800"
            fill="#4edad5"
            stroke="#4edad5"
            strokeWidth="2"
            strokeLinejoin="round"
            className="font-['Open_Sans',sans-serif]"
          >
            Tackt
          </text>
        </svg>
      </h1>
      <nav className="mt-[118px] flex flex-col items-center gap-5">
        {links.map((l) => (
          <a
            key={l}
            href="#"
            className="flex h-20 w-56 items-center justify-center rounded-lg border-2 border-[#30d8d2] pb-[6px] font-['Noto_Sans_CJK_JP',sans-serif] text-[30px] leading-10 text-[#30d8d2]"
          >
            {l}
          </a>
        ))}
      </nav>
    </main>
  );
}

export default function App() {
  return (
    <div className="flex h-screen flex-col overflow-hidden bg-[#0d0c0d] font-['Inter','Noto_Sans_CJK_JP',sans-serif]">
      <MenuBar />
      <div className="flex min-h-0 flex-1 bg-[linear-gradient(180deg,#7b7fa0_0%,#2a2c3c_50%,#0d0c0d_100%)]">
        <Dock />
        <section className="relative flex min-w-0 flex-1 flex-col overflow-hidden rounded-[10px] bg-[linear-gradient(180deg,#ebebeb_0,#ebebeb_86px,#e3e3e3_220px)]">
          <TabStrip />
          <Toolbar />
          <BookmarksBar />
          <Page />
          <div className="pointer-events-none absolute inset-y-0 left-0 z-20 w-36 bg-[linear-gradient(90deg,#00000013,#00000008_35%,#00000002_70%,#00000000)]" />
        </section>
      </div>
    </div>
  );
}
